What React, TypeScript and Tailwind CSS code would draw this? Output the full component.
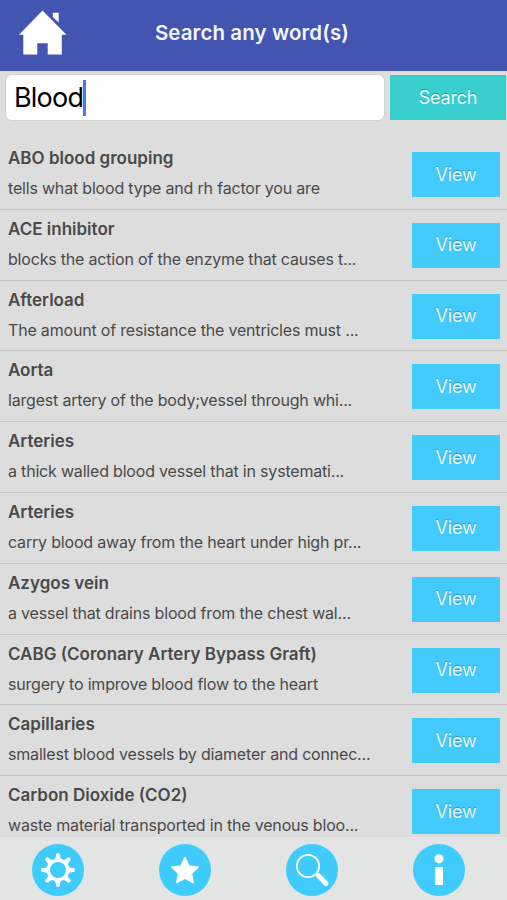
import { useState } from 'react'

type Entry = { term: string; text: string }

const entries: Entry[] = [
  { term: 'ABO blood grouping', text: 'tells what blood type and rh factor you are' },
  { term: 'ACE inhibitor', text: 'blocks the action of the enzyme that causes t...' },
  { term: 'Afterload', text: 'The amount of resistance the ventricles must ...' },
  { term: 'Aorta', text: 'largest artery of the body;vessel through whi...' },
  { term: 'Arteries', text: 'a thick walled blood vessel that in systemati...' },
  { term: 'Arteries', text: 'carry blood away from the heart under high pr...' },
  { term: 'Azygos vein', text: 'a vessel that drains blood from the chest wal...' },
  { term: 'CABG (Coronary Artery Bypass Graft)', text: 'surgery to improve blood flow to the heart' },
  { term: 'Capillaries', text: 'smallest blood vessels by diameter and connec...' },
  { term: 'Carbon Dioxide (CO2)', text: 'waste material transported in the venous bloo...' },
]

function HomeIcon() {
  return (
    <svg width="48" height="45" viewBox="0 0 48 45" fill="#fff">
      <path d="M23.5 .5L47.5 24.7H42.8V44.5H28.7V33.3H18.3V44.5H4.3V24.7H0L23.5 .5Z" />
      <path d="M33.8 2.7H39.7V12.6L33.8 6.9Z" />
    </svg>
  )
}

function GearIcon() {
  return (
    <svg className="size-[52px]" viewBox="0 0 52 52">
      <circle cx="26" cy="26" r="26" fill="#40cbfd" />
      <circle cx="26" cy="26" r="9.7" fill="none" stroke="#fff" strokeWidth="3.4" />
      {[0, 45, 90, 135, 180, 225, 270, 315].map((angle) => (
        <path
          key={angle}
          d="M22.2 15.6Q24 14.6 24.1 10.6Q24.3 9 26 9Q27.7 9 27.9 10.6Q28 14.6 29.8 15.6Z"
          fill="#fff"
          transform={`rotate(${angle} 26 26)`}
        />
      ))}
    </svg>
  )
}

function StarIcon() {
  return (
    <svg className="size-[52px]" viewBox="0 0 52 52">
      <circle cx="26" cy="26" r="26" fill="#40cbfd" />
      <path
        d="M26 13.5L29.9 21.9L39.3 23.1L32.4 29.4L34.2 38.7L26 34.2L17.8 38.7L19.6 29.4L12.7 23.1L22.1 21.9Z"
        fill="#fff"
        stroke="#fff"
        strokeWidth="1.4"
        strokeLinejoin="round"
      />
    </svg>
  )
}

function SearchIcon() {
  return (
    <svg className="size-[52px]" viewBox="0 0 52 52" fill="none" stroke="#fff">
      <circle cx="26" cy="26" r="26" fill="#40cbfd" stroke="none" />
      <circle cx="22" cy="22" r="11.2" strokeWidth="1.8" />
      <path d="M29.7 29.7L33 33" strokeWidth="2" />
      <path d="M32.5 31.8L40 39.6" strokeWidth="5" strokeLinecap="round" />
    </svg>
  )
}

function InfoIcon() {
  return (
    <svg className="size-[52px]" viewBox="0 0 52 52">
      <circle cx="26" cy="26" r="26" fill="#40cbfd" />
      <circle cx="26" cy="14.8" r="4.5" fill="#fff" />
      <rect x="22" y="23" width="8" height="18" fill="#fff" />
    </svg>
  )
}

export default function App() {
  const [query] = useState('Blood')

  return (
    <main className="flex h-[900px] w-[507px] flex-col overflow-hidden bg-[#dddddd] font-['Inter',sans-serif] text-[#4a4a4a]">
      <header className="grid h-[71px] shrink-0 grid-cols-[1fr_auto_1fr] items-center bg-[#4355b1] pb-[5px]">
        <button className="ml-[19px] w-12 -translate-y-px" aria-label="Home">
          <HomeIcon />
        </button>
        <h1 className="mt-px mr-[3px] text-[20.5px] font-semibold tracking-[0.1px] text-[#f3f4ff]">Search any word(s)</h1>
      </header>

      <div className="flex h-[68px] shrink-0 items-start gap-[5px] pt-[3px] pl-[5px]">
        <div className="flex h-[47px] w-[380px] items-center rounded-[7px] border border-[#d2d2d2] bg-white pl-2 text-[27px] tracking-[-0.8px] text-black">
          <span className="mt-px">{query}</span>
          <span className="h-9 w-[3px] bg-[#4b76ee]" />
        </div>
        <button className="mt-px h-[45px] w-[116px] bg-[#3acfcf] text-lg tracking-[-0.2px] text-[#e9fbfb] [text-shadow:0_-1px_1px_#2b9c9c]">
          Search
        </button>
      </div>

      <ul className="min-h-0 flex-1 overflow-hidden">
        {entries.map((entry, i) => (
          <li key={i} className="flex h-[70.8px] justify-between border-b border-[#c4c4c4] pr-[7px] pl-2">
            <div className="pt-[7px] whitespace-nowrap">
              <h2 className="text-[17px] leading-6 font-semibold">{entry.term}</h2>
              <p className="mt-[6px] text-[16px] leading-6 tracking-[-0.19px]">{entry.text}</p>
            </div>
            <button className="mt-[13px] h-[45px] w-[88px] bg-[#43cbfd] text-lg tracking-[-0.2px] text-[#e9f9ff] [text-shadow:0_-1px_1px_#3195bb]">
              View
            </button>
          </li>
        ))}
      </ul>

      <nav className="flex h-[63px] shrink-0 justify-between bg-[#e2e5e4] px-[32px] pt-[7px] pr-[42px]">
        <button className="h-[52px]" aria-label="Settings"><GearIcon /></button>
        <button className="h-[52px]" aria-label="Favorites"><StarIcon /></button>
        <button className="h-[52px]" aria-label="Search"><SearchIcon /></button>
        <button className="h-[52px]" aria-label="Info"><InfoIcon /></button>
      </nav>
    </main>
  )
}
